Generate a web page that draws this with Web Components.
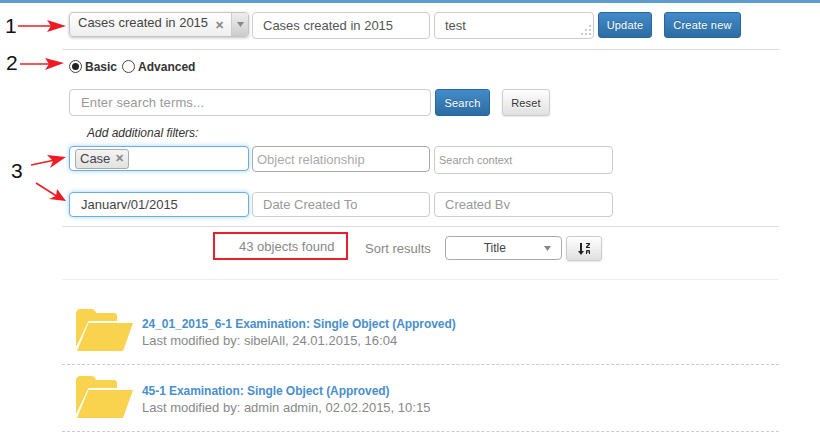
<!DOCTYPE html>
<html><head><meta charset="utf-8"><title>Search</title>
<style>
html,body{margin:0;padding:0;background:#fff;height:437px;overflow:hidden}
body{font:13px "Liberation Sans",Arial,sans-serif;color:#333}
</style></head><body>
<search-page></search-page>
<script>
const def=(name,css,html)=>{customElements.define(name,class extends HTMLElement{constructor(){super();this.attachShadow({mode:'open'}).innerHTML=`<style>${css}</style>${typeof html==='function'?html(this):html}`}})};

def('ui-field',`:host{display:flex;box-sizing:border-box;align-items:center;border:1px solid #ccc;border-radius:4px;background:#fff;height:var(--h,27px);width:var(--w,178px);padding-left:var(--pl,10px);font-size:var(--fs,13px);color:var(--c,#999);overflow:hidden;white-space:nowrap;flex:none;position:relative}
:host([focus]){border-color:#66afe9;box-shadow:0 0 5px rgba(102,175,233,.55);color:#444}
:host([dark]){border-color:#aaa}
:host([filled]){color:#555}
svg{position:absolute;right:1px;bottom:1px}
.clip{height:12px;line-height:15px;overflow:hidden;margin-bottom:3px}`,
el=>`${el.hasAttribute('clip')?'<div class="clip"><slot></slot></div>':'<slot></slot>'}${el.hasAttribute('grip')?'<svg width="13" height="13" fill="#ccc"><rect x="10" y="1" width="2" height="2"/><rect x="6" y="5" width="2" height="2"/><rect x="10" y="5" width="2" height="2"/><rect x="2" y="9" width="2" height="2"/><rect x="6" y="9" width="2" height="2"/><rect x="10" y="9" width="2" height="2"/></svg>':''}`);

def('ui-button',`:host{display:flex;box-sizing:border-box;align-items:center;justify-content:center;flex:none;height:var(--h,27px);width:var(--w,54px);border-radius:3px;font-size:11px;letter-spacing:.2px;color:#fff;background:linear-gradient(#428bca,#2d6ca2);border:1px solid #2b669a;text-shadow:0 -1px 0 rgba(0,0,0,.2)}
:host([plain]){color:#333;background:linear-gradient(#fff,#e0e0e0);border-color:#ccc;text-shadow:0 1px 0 #fff;box-shadow:0 1px 2px rgba(0,0,0,.1)}`,`<slot></slot>`);

def('ui-combo',`:host{display:flex;box-sizing:border-box;flex:none;width:180px;height:25px;border:1px solid #c4c4c4;border-radius:4px;background:linear-gradient(#fff,#eee);box-shadow:0 1px 3px rgba(0,0,0,.25);color:#444;font-size:13px;overflow:hidden}
.t{flex:1;display:flex;align-items:flex-start;padding:2px 0 0 8px;white-space:nowrap}
.x{color:#888;font-weight:bold;font-size:11px;margin:4px 0 0 auto;padding-right:7px}
.a{width:16px;border-left:1px solid #ccc;background:linear-gradient(#eee,#ccc);display:flex;align-items:center;justify-content:center}`,
`<div class="t"><slot></slot><span class="x">✕</span></div><div class="a"><svg width="7" height="5"><path d="M0 0h7L3.500 5z" fill="#888"/></svg></div>`);

def('ui-radio',`:host{display:inline-flex;align-items:center;font-weight:bold;font-size:12px;color:#333;gap:3px}
.r{width:13px;height:13px;box-sizing:border-box;border:1px solid #444;border-radius:50%;background:#fff;display:flex;align-items:center;justify-content:center;margin-top:-2px}
.d{width:7px;height:7px;border-radius:50%;background:#222}`,
el=>`<span class="r">${el.hasAttribute('checked')?'<span class="d"></span>':''}</span><slot></slot>`);

def('ui-tag',`:host{display:inline-flex;align-items:center;box-sizing:border-box;height:20px;padding:0 4px;border:1px solid #aaa;border-radius:3px;background:linear-gradient(#f4f4f4,#e2e2e2);color:#444;font-size:13px;gap:5px}
span{color:#888;font-weight:bold;font-size:11px}`,`<slot></slot><span>✕</span>`);

def('ui-folder',`:host{display:block;width:57px;height:42px;flex:none}svg{display:block}`,
`<svg width="57" height="42" viewBox="0 0 57 42"><path d="M0 5Q0 0 5 0H15Q19 0 20 4H38Q41 4 41 7V12H12.500L0 38z" fill="#f9d24e"/><path d="M12.500 14H57L47 42H1z" fill="#f9d24e"/></svg>`);

def('result-item',`:host{display:flex;box-sizing:border-box;height:67px;border-bottom:1px dashed #ccc;padding:11px 0 0 14px;gap:9px}
.b{padding-top:7px}.t{font-weight:bold;color:#4a8fcb;font-size:12px;letter-spacing:-.06px;line-height:16px}.s{color:#888;font-size:13px;line-height:18px;margin-top:0}`,
el=>`<ui-folder></ui-folder><div class="b"><div class="t">${el.getAttribute('title-text')}</div><div class="s">${el.getAttribute('sub')}</div></div>`);

def('ui-rule',`:host{display:block;height:1px;background:var(--rc,#ddd)}`,``);

def('search-page',`
:host{display:block;position:relative;width:820px;height:437px;overflow:hidden}
.bar{height:3px;background:#5c9ccc}
.main{margin-left:62px;width:717px;display:flex;flex-direction:column}
.row{display:flex;padding-left:7px;gap:4px;align-items:flex-start}
.r1{margin-top:9px;height:37px}
.r2{margin-top:9px;height:16px;align-items:center;gap:5px}
.r3{margin-top:14px}
.lbl{font-style:italic;font-size:12px;color:#333;margin:10px 0 0 25px;height:14px;line-height:14px}
.r4{margin-top:6px;height:46px}
.r5{height:34px}
.sort{display:flex;height:52px;align-items:flex-start}
.found{box-sizing:border-box;margin:5px 0 0 151px;width:135px;height:28px;border:2px solid #e8202e;color:#888;display:flex;align-items:center;padding:0 0 0 24px}
.sl{color:#888;margin:14px 0 0 17px}
.sel{box-sizing:border-box;margin:9px 0 0 14px;width:117px;height:24px;border:1px solid #aaa;border-radius:4px;display:flex;align-items:center;position:relative;justify-content:center;color:#444;padding-right:17px;font-size:12px}
.sel svg{position:absolute;right:10px;top:9px}
.sb{margin:9px 0 0 4px}
.ann{position:absolute;left:0;top:0;width:820px;height:437px;pointer-events:none}
.n{position:absolute;font:21px "Liberation Sans",Arial,sans-serif;color:#111;line-height:21px}
`,`
<div class="bar"></div>
<div class="main">
 <div class="row r1">
  <ui-combo>Cases created in 2015</ui-combo>
  <ui-field filled style="margin-left:-1px">Cases created in 2015</ui-field>
  <ui-field filled grip style="--w:160px">test</ui-field>
  <ui-button style="--w:54px;--h:26px">Update</ui-button>
  <ui-button style="--w:77px;--h:26px;margin-left:8px">Create new</ui-button>
 </div>
 <ui-rule></ui-rule>
 <div class="row r2">
  <ui-radio checked>Basic</ui-radio><ui-radio>Advanced</ui-radio>
 </div>
 <div class="row r3">
  <ui-field style="--w:362px;--pl:11px;letter-spacing:.12px">Enter search terms...</ui-field>
  <ui-button style="--w:55px">Search</ui-button>
  <ui-button plain style="--w:48px;margin-left:8px">Reset</ui-button>
 </div>
 <div class="lbl">Add additional filters:</div>
 <div class="row r4">
  <ui-field focus style="--h:25px;--w:180px;--pl:5px"><ui-tag>Case</ui-tag></ui-field>
  <ui-field dark style="--h:26px;--pl:4px;margin-left:-1px;--c:#aaa">Object relationship</ui-field>
  <ui-field style="--h:28px;--w:179px;--pl:4px;--fs:11px">Search context</ui-field>
 </div>
 <div class="row r5">
  <ui-field focus clip style="--h:25px;--w:180px;--pl:11px">January/01/2015</ui-field>
  <ui-field clip style="--h:25px;margin-left:-1px">Date Created To</ui-field>
  <ui-field clip style="--h:25px;--w:179px">Created By</ui-field>
 </div>
 <ui-rule></ui-rule>
 <div class="sort">
  <div class="found">43 objects found</div>
  <div class="sl">Sort results</div>
  <div class="sel">Title<svg width="7" height="5"><path d="M0 0h7L3.500 5z" fill="#888"/></svg></div>
  <ui-button plain class="sb" style="--w:36px;--h:25px"><svg width="14" height="14" viewBox="0 0 14 14"><path d="M3 1h2v8h2L4 13 1 9h2z" fill="#222"/><path d="M9 1h4v1.500L10.500 5H13v1H9V4.800L11.500 2H9zM9 12V9q0-1 1-1h2q1 0 1 1v3h-1v-1.500h-2V12zM10 9.500h2V9h-2z" fill="#222"/></svg></ui-button>
 </div>
 <ui-rule style="--rc:#eee"></ui-rule>
 <div style="margin-top:18px">
  <result-item title-text="24_01_2015_6-1 Examination: Single Object (Approved)" sub="Last modified by: sibelAll, 24.01.2015, 16:04"></result-item>
  <result-item title-text="45-1 Examination: Single Object (Approved)" sub="Last modified by: admin admin, 02.02.2015, 10:15"></result-item>
 </div>
</div>
<div class="ann">
 <span class="n" style="left:5px;top:15px">1</span>
 <span class="n" style="left:6px;top:52px">2</span>
 <span class="n" style="left:11px;top:160px">3</span>
 <svg width="820" height="437" style="position:absolute;left:0;top:0" fill="#ed1c24" stroke="#ed1c24">
  <path d="M18 26H54" stroke-width="1.500"/><path d="M47 20L66 26 47 32 51 26z" stroke="none"/>
  <path d="M20 64H52" stroke-width="1.500"/><path d="M45 58L64 63 45 70 49 64z" stroke="none"/>
  <path d="M31 165L55 160" stroke-width="1.500"/><path d="M47 155L66 157 50 168 53 161z" stroke="none"/>
  <path d="M36 183L58 197" stroke-width="1.500"/><path d="M57 189L66 201 49 199 56 196z" stroke="none"/>
 </svg>
</div>
`);
</script></body></html>
